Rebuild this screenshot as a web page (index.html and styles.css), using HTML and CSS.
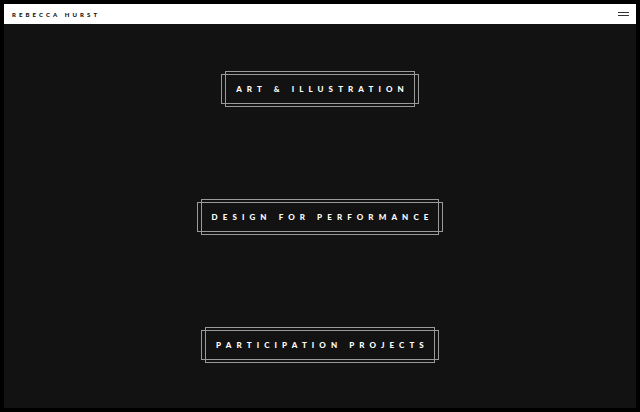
FILE: index.html
```html
<!DOCTYPE html>
<html>
<head>
<meta charset="utf-8">
<link rel="stylesheet" href="styles.css">
</head>
<body>
<div class="page">
  <header class="header">
    <span class="brand">REBECCA HURST</span>
    <span class="burger"><i></i><i></i></span>
  </header>
  <main class="main">
    <a class="tile">ART &amp; ILLUSTRATION</a>
    <a class="tile">DESIGN FOR PERFORMANCE</a>
    <a class="tile">PARTICIPATION PROJECTS</a>
  </main>
</div>
</body>
</html>
```
FILE: styles.css
```css
html, body { margin: 0; padding: 0; }
body {
  background: #000;
  width: 640px;
  height: 412px;
  box-sizing: border-box;
  padding: 4px 4px 4px 4px;
  font-family: "Lato", "Open Sans", sans-serif;
}
.page {
  background: #121212;
  height: 404px;
  display: flex;
  flex-direction: column;
}
.header {
  background: #fff;
  height: 20px;
  display: flex;
  align-items: center;
  justify-content: space-between;
  padding: 0 7px 0 8px;
}
.brand {
  font-size: 6px;
  font-weight: 900;
  letter-spacing: 3.1px;
  color: #111;
}
.burger {
  display: flex;
  flex-direction: column;
  gap: 2px;
  width: 11px;
}
.burger i {
  display: block;
  height: 1px;
  background: #333;
}
.main {
  display: flex;
  flex-direction: column;
  align-items: center;
  padding-top: 47px;
  gap: 92px;
}
.tile {
  position: relative;
  display: block;
  height: 34px;
  line-height: 34px;
  border: 1px solid #9a9a9a;
  color: #fff;
  font-size: 8px;
  font-weight: 900;
  letter-spacing: 5.1px;
  padding: 0 5px 0 10px;
  white-space: nowrap;
}
.tile::before {
  content: "";
  position: absolute;
  left: -5px;
  right: -5px;
  top: 2px;
  bottom: 2px;
  border: 1px solid #9a9a9a;
}
```
